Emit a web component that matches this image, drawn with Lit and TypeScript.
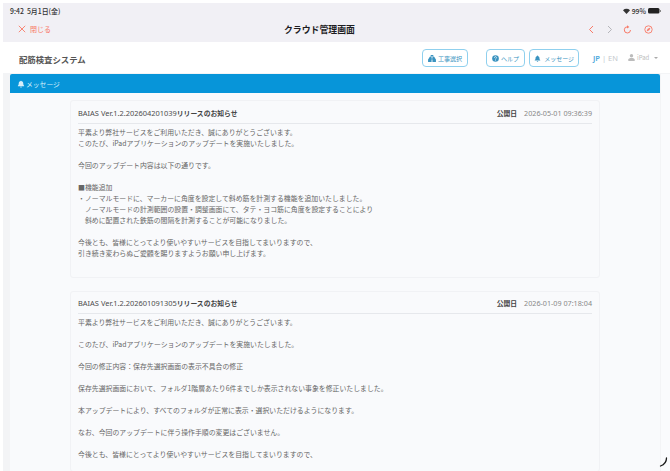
import { LitElement, html, css, svg } from "lit";
import { customElement } from "lit/decorators.js";

const bell = svg`<path fill="currentColor" d="M6 1a1 1 0 0 1 1 1c1.700.4 2.400 1.800 2.400 3.400 0 1.700.5 2.400 1.300 3.300v.7H1.300v-.7c.8-.9 1.300-1.600 1.300-3.300C2.600 3.800 3.300 2.400 5 2a1 1 0 0 1 1-1zM4.700 10.100h2.600a1.300 1.300 0 0 1-2.600 0z"/>`;

const cards = [
  {
    title: "BAIAS Ver.1.2.202604201039",
    date: "2026-05-01 09:36:39",
    spaced: false,
    lines: [
      "平素より弊社サービスをご利用いただき、誠にありがとうございます。",
      "このたび、iPadアプリケーションのアップデートを実施いたしました。",
      "",
      "今回のアップデート内容は以下の通りです。",
      "",
      "■機能追加",
      "・ノーマルモードに、マーカーに角度を設定して斜め筋を計測する機能を追加いたしました。",
      "　ノーマルモードの計測範囲の設置・調整画面にて、タテ・ヨコ筋に角度を設定することにより",
      "　斜めに配置された鉄筋の間隔を計測することが可能になりました。",
      "",
      "今後とも、皆様にとってより使いやすいサービスを目指してまいりますので、",
      "引き続き変わらぬご愛顧を賜りますようお願い申し上げます。",
    ],
  },
  {
    title: "BAIAS Ver.1.2.202601091305",
    date: "2026-01-09 07:18:04",
    spaced: true,
    lines: [
      "平素より弊社サービスをご利用いただき、誠にありがとうございます。",
      "このたび、iPadアプリケーションのアップデートを実施いたしました。",
      "今回の修正内容：保存先選択画面の表示不具合の修正",
      "保存先選択画面において、フォルダ1階層あたり6件までしか表示されない事象を修正いたしました。",
      "本アップデートにより、すべてのフォルダが正常に表示・選択いただけるようになります。",
      "なお、今回のアップデートに伴う操作手順の変更はございません。",
      "今後とも、皆様にとってより使いやすいサービスを目指してまいりますので、",
    ],
  },
];

@customElement("app-root")
export class AppRoot extends LitElement {
  static styles = css`
    :host {
      display: block;
      position: relative;
      width: 670px;
      height: 471px;
      overflow: hidden;
      background: #fff;
      font-family: "Noto Sans CJK JP", "Liberation Sans", sans-serif;
      color: #555;
    }
    .shell {
      margin: 3px 0 0 3px;
      height: 468px;
      display: flex;
      flex-direction: column;
      overflow: hidden;
    }
    .chrome {
      height: 39px;
      flex: none;
      background: #f1f0f5;
      padding: 0 0 0 7px;
      box-sizing: border-box;
    }
    .status {
      height: 16px;
      display: flex;
      align-items: center;
      justify-content: space-between;
      padding: 0 9px 0 0;
      font-size: 6.900px;
      font-weight: 500;
      color: #333;
    }
    .status .r { display: flex; align-items: center; gap: 2px; }
    .nav {
      height: 23px;
      display: grid;
      grid-template-columns: 274px auto 1fr;
      align-items: center;
      padding-bottom: 3px;
      box-sizing: border-box;
    }
    .close {
      display: flex;
      align-items: center;
      gap: 4px;
      padding-left: 8px;
      font-size: 7px;
      color: #f87a68;
    }
    .title { font-size: 8.900px; font-weight: 700; color: #1d1d1f; }
    .tools {
      display: flex;
      justify-content: flex-end;
      align-items: center;
      gap: 9px;
      padding-right: 17px;
    }
    .tools .last { margin-left: 3px; }
    .head {
      height: 31px;
      flex: none;
      display: flex;
      align-items: center;
      padding: 0 0 0 16px;
      background: #fff;
      box-sizing: border-box;
    }
    .brand { font-size: 8.400px; font-weight: 700; color: #555; width: 403px; flex: none; margin-top: 2px; }
    .btn {
      height: 18px;
      box-sizing: border-box;
      border: 1px solid #8fd0ee;
      border-radius: 4px;
      display: flex;
      align-items: center;
      justify-content: center;
      gap: 2px;
      font-size: 6px;
      color: #3a93c0;
      background: #fff;
      margin-top: 1px;
    }
    .b1 { width: 46px; margin-right: 18px; }
    .b2 { width: 39px; margin-right: 4px; }
    .b3 { width: 50px; margin-right: 14px; }
    .lang { font-size: 7.500px; color: #c4c8cc; width: 35px; flex: none; font-family: "Noto Sans", sans-serif; white-space: nowrap; }
    .lang b { color: #4ea9dc; font-weight: 600; }
    .user { display: flex; align-items: center; gap: 2px; font-size: 6px; color: #bcbcbc; }
    .caret { width: 0; height: 0; border: 2px solid transparent; border-top-color: #aaa; border-bottom: 0; margin-left: 3px; }
    .main {
      flex: 1;
      min-height: 0;
      background: #f3f4f6;
      padding: 1px 0 0 7px;
      display: flex;
    }
    .panel {
      width: 650px;
      flex: none;
      display: flex;
      flex-direction: column;
      min-height: 0;
    }
    .ph {
      height: 19px;
      flex: none;
      background: #0795d9;
      border-radius: 2px 2px 0 0;
      color: #d5eefa;
      font-size: 6.800px;
      display: flex;
      align-items: center;
      gap: 1px;
      padding: 0 0 0 7px;
      box-sizing: border-box;
    }
    .pb {
      flex: 1;
      background: #f9fafc;
      padding: 7px 60px 0 60px;
      overflow: hidden;
      min-height: 0;
    }
    .side { flex: 1; background: #fafbfd; margin-left: 1px; }
    .card {
      border: 1px solid #f1f2f5;
      border-radius: 3px;
      padding: 0 7px;
      margin-bottom: 13px;
      box-sizing: border-box;
      background: #f9fafc;
    }
    .card.first { height: 178px; }
    .ct {
      height: 23px;
      padding-top: 2px;
      display: flex;
      align-items: center;
      justify-content: space-between;
      border-bottom: 1px solid #e6e8ec;
      font-size: 6.800px;
      color: #4d4d4d;
      box-sizing: border-box;
    }
    .spaced .ct { height: 22px; padding-top: 0; }
    .ct .ver { font-family: "Noto Sans", sans-serif; font-size: 7.450px; }
    .ct b { font-weight: 700; color: #444; }
    .ct .when { color: #888; font-family: "Noto Sans", sans-serif; font-size: 7.200px; margin-left: 7px; }
    .ct .when-l { font-weight: 700; color: #444; font-size: 6.800px; }
    .body { padding-top: 3px; font-size: 6.880px; line-height: 11px; color: #666; }
    .line { height: 11px; white-space: nowrap; }
    .spaced .line { margin-bottom: 11px; }
    .spinner { position: absolute; right: 0; bottom: 0; }
  `;

  render() {
    return html`
      <div class="shell">
        <div class="chrome">
          <div class="status">
            <span>9:42&nbsp;&nbsp;5月1日(金)</span>
            <span class="r">
              <svg width="7" height="6" viewBox="0 0 14 12"><path fill="#333" d="M7 12 0 4.500a10 10 0 0 1 14 0z"/></svg>
              <span>99%</span>
              <svg width="13" height="6" viewBox="0 0 13 6"><rect width="11.500" height="5.600" rx="1.500" fill="#222"/><rect x="12" y="2" width="1" height="2" fill="#888"/></svg>
            </span>
          </div>
          <div class="nav">
            <div class="close">
              <svg width="8" height="8" viewBox="0 0 8 8"><path d="M.8.8l6.400 6.400M7.200.8.800 7.200" stroke="#f87a68" fill="none" stroke-width=".9"/></svg>
              <span>閉じる</span>
            </div>
            <div class="title">クラウド管理画面</div>
            <div class="tools">
              <svg width="9" height="9" viewBox="0 0 9 9"><path d="M6 1 2.500 4.500 6 8" stroke="#f87a68" fill="none" stroke-width="1"/></svg>
              <svg width="9" height="9" viewBox="0 0 9 9"><path d="M3 1l3.500 3.500L3 8" stroke="#b5b5ba" fill="none" stroke-width="1"/></svg>
              <svg width="9" height="9" viewBox="0 0 9 9"><path d="M7.500 5a3.100 3.100 0 1 1-3-3.200" stroke="#f87a68" fill="none" stroke-width="1"/><path d="M4 .2 6.400 1.900 4 3.600z" fill="#f87a68"/></svg>
              <svg class="last" width="9" height="9" viewBox="0 0 9 9"><circle cx="4.500" cy="4.500" r="3.700" stroke="#f87a68" fill="none" stroke-width=".9"/><path d="M6.500 2.500 5.300 5.300 2.500 6.500 3.700 3.700z" fill="#f87a68"/></svg>
            </div>
          </div>
        </div>
        <div class="head">
          <div class="brand">配筋検査システム</div>
          <div class="btn b1">
            <svg width="8" height="7" viewBox="0 0 9 8"><path fill="#3a93c0" d="M3 0h3v2h1l2 3v3H0V5l2-3h1z"/><path fill="#fff" d="M4 1h1v3H4zM4 5h1v3H4z"/></svg>
            <span>工事選択</span>
          </div>
          <div class="btn b2">
            <svg width="7" height="7" viewBox="0 0 8 8"><circle cx="4" cy="4" r="3.800" fill="#3a93c0"/><path d="M2.800 3.100a1.200 1.200 0 1 1 1.800 1c-.5.3-.6.500-.6 1" stroke="#fff" fill="none" stroke-width=".8"/><circle cx="4" cy="6.200" r=".5" fill="#fff"/></svg>
            <span>ヘルプ</span>
          </div>
          <div class="btn b3">
            <svg width="7" height="7" viewBox="0 0 12 12">${bell}</svg>
            <span>&nbsp;メッセージ</span>
          </div>
          <div class="lang"><b>JP</b> | EN</div>
          <div class="user">
            <svg width="7" height="7" viewBox="0 0 7 7"><circle cx="3.500" cy="1.800" r="1.700" fill="#bcbcbc"/><path d="M.3 7V5.600C.3 4.500 1.600 4 3.500 4s3.200.5 3.200 1.600V7z" fill="#bcbcbc"/></svg>
            <span>iPad</span>
            <span class="caret"></span>
          </div>
        </div>
        <div class="main">
          <div class="panel">
            <div class="ph">
              <svg width="8" height="8" viewBox="0 0 12 12">${bell}</svg>
              <span>メッセージ</span>
            </div>
            <div class="pb">
              ${cards.map(
                (c, i) => html`
                  <div class="card ${i === 0 ? "first" : ""} ${c.spaced ? "spaced" : ""}">
                    <div class="ct">
                      <span><span class="ver">${c.title}</span><b>リリースのお知らせ</b></span>
                      <span><span class="when-l">公開日</span><span class="when">${c.date}</span></span>
                    </div>
                    <div class="body">
                      ${c.lines.map((l) => html`<div class="line">${l}</div>`)}
                    </div>
                  </div>
                `
              )}
            </div>
          </div>
          <div class="side"></div>
        </div>
      </div>
      <svg class="spinner" width="12" height="15" viewBox="0 0 12 15">
        <path d="M8.500 2c0 4-2 6.500-6 8" stroke="#1a1a1a" stroke-width="1.300" fill="none" stroke-linecap="round"/>
      </svg>
    `;
  }
}
